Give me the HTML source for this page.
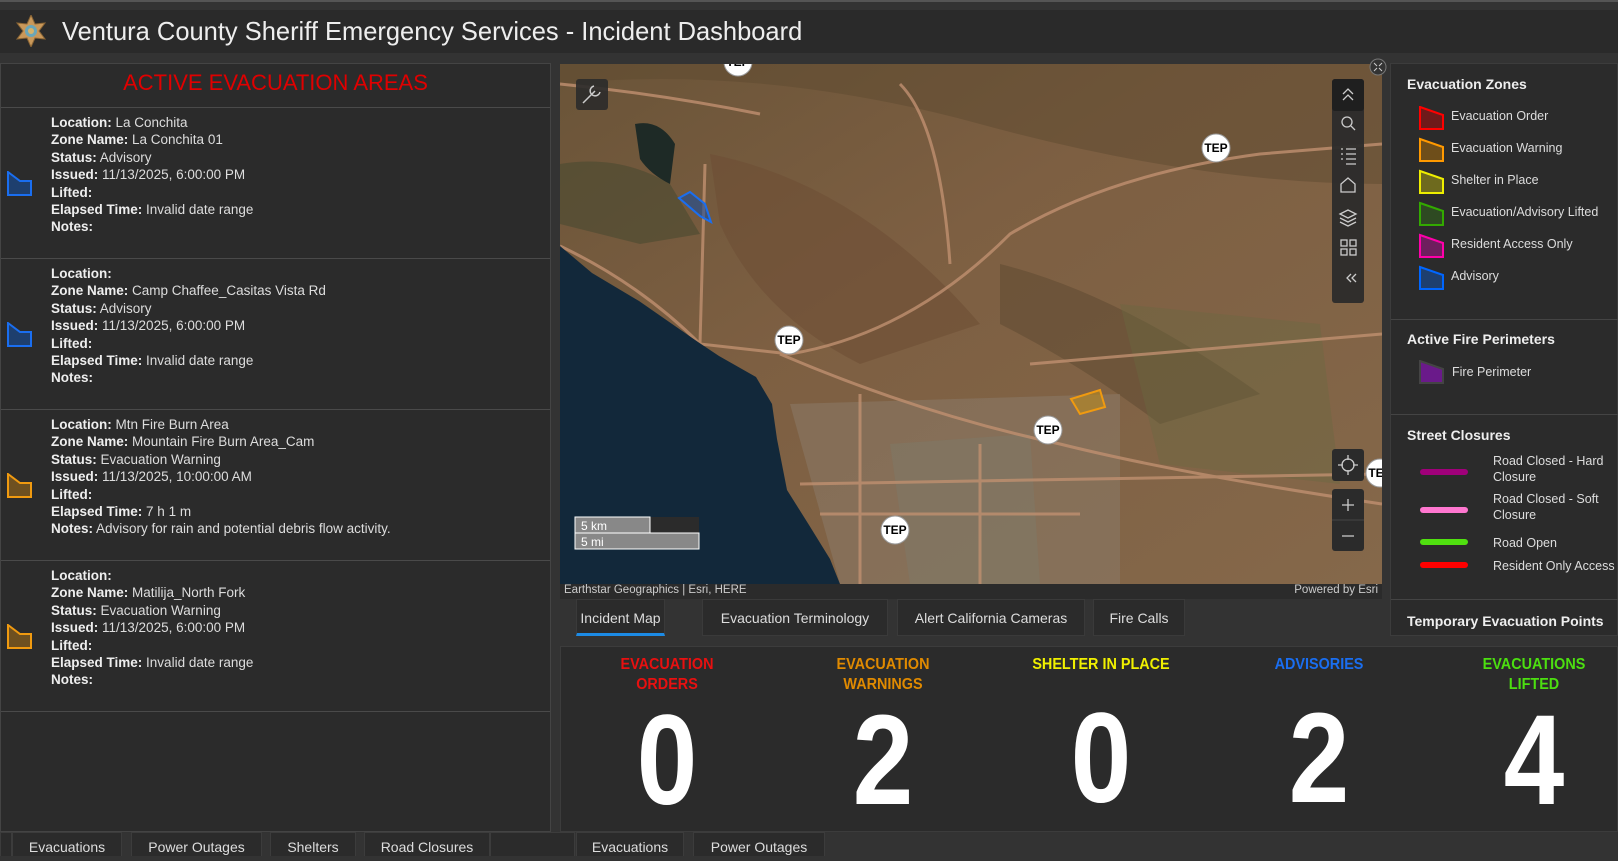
<!DOCTYPE html>
<html><head><meta charset="utf-8"><style>
*{margin:0;padding:0;box-sizing:border-box}
body{width:1618px;height:856px;overflow:hidden;background:#333;font-family:"Liberation Sans",sans-serif;color:#ddd;position:relative}
.a{position:absolute}
.hdr{left:0;top:10px;width:1618px;height:43px;background:#2a2a2a}
.hdr h1{position:absolute;left:62px;top:6px;font-weight:normal;font-size:26px;color:#eee;white-space:nowrap;transform:scaleX(.98);transform-origin:left}
.lp{left:0;top:63px;width:551px;height:769px;background:#2b2b2b;border:1px solid #444}
.item{position:absolute;left:0;width:549px;height:151px;border-top:1px solid #4a4a4a}
.item .t{position:absolute;left:50px;top:6px;font-size:13.5px;line-height:17.4px;color:#ddd}
.item b{color:#eee}
.item svg{position:absolute;left:6px;top:63px}
.map{left:560px;top:64px;width:822px;height:520px;overflow:hidden;background:#7a6045}
.attr{left:560px;top:584px;width:822px;height:15px;background:#2b2b2b;font-size:11.5px;color:#ccc}
.tab{position:absolute;top:599px;height:37px;background:#2b2b2b;border:1px solid #3a3a3a;font-size:14px;color:#ddd;text-align:center;line-height:36px}
.stats{left:560px;top:646px;width:1058px;height:186px;background:#2b2b2b;border:1px solid #3c3c3c}
.col{position:absolute;top:0;width:200px;margin-left:-100px;text-align:center}
.col .h{position:absolute;top:8px;width:200px;font-size:16px;font-weight:bold;line-height:20px;transform:scaleX(.9)}
.col .n{position:absolute;top:39px;width:200px;font-size:128px;font-weight:bold;color:#fff;transform:scaleX(.85);line-height:150px}
.rp{left:1390px;top:63px;width:228px;height:573px;background:#2b2b2b;border:1px solid #3c3c3c}
.lg{position:absolute;left:16px;font-size:14px;font-weight:bold;color:#eee}
.li{position:absolute;left:60px;font-size:12.5px;color:#ddd;line-height:16px}
.sep{position:absolute;left:0;width:228px;height:1px;background:#444}
.btab{position:absolute;top:832px;height:24px;background:#2b2b2b;border:1px solid #3c3c3c;border-bottom:none;font-size:14px;color:#ddd;text-align:center;line-height:28px}
.tep{fill:#fff;stroke:#999}
</style></head><body>
<div class="a" style="left:0;top:0;width:1618px;height:2px;background:#555"></div>
<div class="a hdr">
<svg class="a" style="left:16px;top:5px" width="30" height="32" viewBox="0 0 30 32"><polygon points="15,0 19,9 29,8 23,16 29,24 19,23 15,32 11,23 1,24 7,16 1,8 11,9" fill="#c9985a" stroke="#8a6535"/><circle cx="15" cy="16" r="6" fill="#6aa6b8"/><circle cx="15" cy="16" r="3" fill="#d6b36a"/></svg>
<h1>Ventura County Sheriff Emergency Services - Incident Dashboard</h1></div>

<div class="a lp">
<div class="a" style="left:0;top:0;width:549px;height:43px;text-align:center;color:#e00000;font-size:22px;line-height:38px">ACTIVE EVACUATION AREAS</div>
<div class="item" style="top:43px"><svg width="26" height="26"><polygon points="1,1 13,10 24,10 24,24 1,24" fill="#1e3f6e" stroke="#1a6ef0" stroke-width="2"/></svg><div class="t"><b>Location:</b> La Conchita<br><b>Zone Name:</b> La Conchita 01<br><b>Status:</b> Advisory<br><b>Issued:</b> 11/13/2025, 6:00:00 PM<br><b>Lifted:</b><br><b>Elapsed Time:</b> Invalid date range<br><b>Notes:</b></div></div>
<div class="item" style="top:194px"><svg width="26" height="26"><polygon points="1,1 13,10 24,10 24,24 1,24" fill="#1e3f6e" stroke="#1a6ef0" stroke-width="2"/></svg><div class="t"><b>Location:</b><br><b>Zone Name:</b> Camp Chaffee_Casitas Vista Rd<br><b>Status:</b> Advisory<br><b>Issued:</b> 11/13/2025, 6:00:00 PM<br><b>Lifted:</b><br><b>Elapsed Time:</b> Invalid date range<br><b>Notes:</b></div></div>
<div class="item" style="top:345px"><svg width="26" height="26"><polygon points="1,1 13,10 24,10 24,24 1,24" fill="#6e5020" stroke="#f09a10" stroke-width="2"/></svg><div class="t"><b>Location:</b> Mtn Fire Burn Area<br><b>Zone Name:</b> Mountain Fire Burn Area_Cam<br><b>Status:</b> Evacuation Warning<br><b>Issued:</b> 11/13/2025, 10:00:00 AM<br><b>Lifted:</b><br><b>Elapsed Time:</b> 7 h 1 m<br><b>Notes:</b> Advisory for rain and potential debris flow activity.</div></div>
<div class="item" style="top:496px"><svg width="26" height="26"><polygon points="1,1 13,10 24,10 24,24 1,24" fill="#6e5020" stroke="#f09a10" stroke-width="2"/></svg><div class="t"><b>Location:</b><br><b>Zone Name:</b> Matilija_North Fork<br><b>Status:</b> Evacuation Warning<br><b>Issued:</b> 11/13/2025, 6:00:00 PM<br><b>Lifted:</b><br><b>Elapsed Time:</b> Invalid date range<br><b>Notes:</b></div></div>
<div class="item" style="top:647px;height:0"></div>
</div>

<div class="a map"><svg width="822" height="520" viewBox="0 0 822 520">
<defs><linearGradient id="g" x1="0" y1="0" x2="1" y2="1"><stop offset="0" stop-color="#6a5438"/><stop offset=".4" stop-color="#7d5f42"/><stop offset="1" stop-color="#85684a"/></linearGradient></defs>
<rect width="822" height="520" fill="url(#g)"/>
<path d="M0 20 Q200 0 420 60 T822 120 L822 0 L0 0Z" fill="#5e4a30" opacity=".5"/>
<path d="M150 90 Q300 120 420 260 L300 300 Q200 250 160 160Z" fill="#6e4e36" opacity=".6"/>
<path d="M440 200 Q560 230 700 330 L600 360 Q520 300 440 260Z" fill="#5c4830" opacity=".5"/>
<path d="M0 100 Q60 90 110 120 L140 170 L80 180 L0 160Z" fill="#4a4a30" opacity=".6"/>
<path d="M230 340 L560 330 L560 520 L280 520Z" fill="#8a7a68" opacity=".55"/>
<path d="M330 380 L470 370 L480 520 L350 520Z" fill="#7d7a68" opacity=".5"/>
<path d="M560 240 L760 260 L780 420 L600 400Z" fill="#6a6a40" opacity=".4"/>
<path d="M75 60 Q100 55 115 80 L110 120 Q90 110 80 95Z" fill="#1e2a26"/>
<g stroke="#c09070" stroke-width="3" fill="none" opacity=".8">
<path d="M0 182 Q80 220 140 280 L230 290 Q350 270 450 170 Q550 110 700 90 L822 80"/>
<path d="M220 290 Q360 350 500 380 Q620 410 822 440"/>
<path d="M145 100 L140 280"/><path d="M340 20 Q380 60 390 200"/>
<path d="M470 300 L822 270"/><path d="M240 420 L820 410"/><path d="M260 450 L520 450"/>
<path d="M300 330 L300 520"/><path d="M420 380 L420 520"/><path d="M0 20 Q100 30 200 50"/>
</g>
<path d="M0 182 L32 209 L79 237 L138 278 L159 292 L196 313 L212 340 L217 375 L227 426 L249 461 L270 495 L280 520 L0 520Z" fill="#12283a"/>
<polygon points="119,134 130,128 145,140 151,158 140,152" fill="#1d4d9a" fill-opacity=".6" stroke="#1a6ef0" stroke-width="2"/>
<polygon points="511,335 540,326 545,343 520,350" fill="#b98a20" fill-opacity=".6" stroke="#f09a10" stroke-width="2"/>
<g font-family="Liberation Sans" font-weight="bold" font-size="12" text-anchor="middle">
<circle class="tep" cx="178" cy="-2" r="14"/><text x="178" y="2">TEP</text>
<circle class="tep" cx="656" cy="84" r="14"/><text x="656" y="88">TEP</text>
<circle class="tep" cx="229" cy="276" r="14"/><text x="229" y="280">TEP</text>
<circle class="tep" cx="488" cy="366" r="14"/><text x="488" y="370">TEP</text>
<circle class="tep" cx="335" cy="466" r="14"/><text x="335" y="470">TEP</text>
<circle class="tep" cx="820" cy="409" r="14"/><text x="820" y="413">TEP</text>
</g>
<rect x="16" y="15" width="32" height="31" rx="3" fill="#2b2b2b" opacity=".9"/>
<path d="M23 39 L35 27 M34 22 a5 5 0 1 0 6 6" stroke="#ccc" stroke-width="1.5" fill="none"/>
<rect x="772" y="15" width="32" height="224" rx="3" fill="#2b2b2b" opacity=".95"/>
<rect x="772" y="15" width="32" height="32" rx="3" fill="#1f1f1f"/>
<g stroke="#ccc" stroke-width="1.3" fill="none">
<path d="M783 30 l5 -5 l5 5 M783 36 l5 -5 l5 5"/>
<circle cx="787" cy="58" r="5"/><path d="M791 62 l4 4"/>
<path d="M786 85 h10 M786 90 h10 M786 95 h10 M786 100 h10 M781 85 h2 M781 90 h2 M781 95 h2"/>
<path d="M781 128 v-8 l7 -6 l7 6 v8 z"/>
<path d="M780 150 l8 -4 l8 4 l-8 4z M780 154 l8 4 l8 -4 M780 158 l8 4 l8 -4"/>
<rect x="781" y="176" width="6" height="6"/><rect x="790" y="176" width="6" height="6"/><rect x="781" y="185" width="6" height="6"/><rect x="790" y="185" width="6" height="6"/>
<path d="M791 210 l-4 4 l4 4 M796 210 l-4 4 l4 4"/>
</g>
<rect x="772" y="385" width="32" height="32" rx="3" fill="#2b2b2b"/>
<circle cx="788" cy="401" r="6" stroke="#ccc" fill="none" stroke-width="1.3"/><path d="M788 391 v5 M788 406 v5 M778 401 h5 M793 401 h5" stroke="#ccc" stroke-width="1.3"/>
<rect x="772" y="425" width="32" height="62" rx="3" fill="#2b2b2b"/>
<path d="M782 441 h12 M788 435 v12 M782 472 h12" stroke="#ccc" stroke-width="1.3"/><path d="M772 456 h32" stroke="#444"/>
<rect x="15" y="453" width="124" height="16" fill="#2b2b2b"/><rect x="15" y="453" width="75" height="16" fill="#888" stroke="#fff"/>
<rect x="15" y="469" width="124" height="16" fill="#888" stroke="#fff"/>
<text x="21" y="466" fill="#fff" font-size="12" font-family="Liberation Sans">5 km</text>
<text x="21" y="482" fill="#fff" font-size="12" font-family="Liberation Sans">5 mi</text>
</svg></div>
<svg class="a" style="left:1369px;top:58px" width="18" height="18"><circle cx="9" cy="9" r="8" fill="#333" stroke="#777"/><path d="M5 5 l3 3 M13 5 l-3 3 M5 13 l3 -3 M13 13 l-3 -3" stroke="#ccc"/></svg>
<div class="a attr"><span style="position:absolute;left:4px;top:0">Earthstar Geographics | Esri, HERE</span><span style="position:absolute;right:4px;top:0">Powered by Esri</span></div>

<div class="tab" style="left:576px;width:89px;border-bottom:3px solid #1c8be6">Incident Map</div>
<div class="tab" style="left:702px;width:186px">Evacuation Terminology</div>
<div class="tab" style="left:897px;width:188px">Alert California Cameras</div>
<div class="tab" style="left:1093px;width:92px">Fire Calls</div>

<div class="a stats">
<div class="col" style="left:106px"><div class="h" style="color:#e81010">EVACUATION<br>ORDERS</div><div class="n">0</div></div>
<div class="col" style="left:322px"><div class="h" style="color:#e08a00">EVACUATION<br>WARNINGS</div><div class="n">2</div></div>
<div class="col" style="left:540px"><div class="h" style="color:#f0f000">SHELTER IN PLACE</div><div class="n" style="top:37px">0</div></div>
<div class="col" style="left:758px"><div class="h" style="color:#1a6ef0">ADVISORIES</div><div class="n" style="top:37px">2</div></div>
<div class="col" style="left:973px"><div class="h" style="color:#4cdf10">EVACUATIONS<br>LIFTED</div><div class="n">4</div></div>
</div>

<div class="a rp">
<div class="lg" style="top:12px">Evacuation Zones</div>
<svg class="a" style="left:28px;top:42px" width="26" height="200">
<g stroke-width="2"><polygon points="1,1 24,9 24,23 1,23" fill="#6e1a1a" stroke="#f00"/>
<polygon points="1,33 24,41 24,55 1,55" fill="#6e4e1a" stroke="#f90"/>
<polygon points="1,65 24,73 24,87 1,87" fill="#6e6a1e" stroke="#ee0"/>
<polygon points="1,97 24,105 24,119 1,119" fill="#2e4a22" stroke="#3a0"/>
<polygon points="1,129 24,137 24,151 1,151" fill="#6e1e5e" stroke="#f0a"/>
<polygon points="1,161 24,169 24,183 1,183" fill="#1e3f6e" stroke="#06f"/></g></svg>
<div class="li" style="top:44px">Evacuation Order</div>
<div class="li" style="top:76px">Evacuation Warning</div>
<div class="li" style="top:108px">Shelter in Place</div>
<div class="li" style="top:140px">Evacuation/Advisory Lifted</div>
<div class="li" style="top:172px">Resident Access Only</div>
<div class="li" style="top:204px">Advisory</div>
<div class="sep" style="top:255px"></div>
<div class="lg" style="top:267px">Active Fire Perimeters</div>
<svg class="a" style="left:28px;top:296px" width="26" height="26"><polygon points="1,1 24,9 24,23 1,23" fill="#6a1a8a" stroke="#444" stroke-width="2"/></svg>
<div class="li" style="top:300px;left:61px">Fire Perimeter</div>
<div class="sep" style="top:350px"></div>
<div class="lg" style="top:363px">Street Closures</div>
<div class="a" style="left:29px;top:405px;width:48px;height:6px;border-radius:3px;background:#a0007a"></div>
<div class="a" style="left:29px;top:443px;width:48px;height:6px;border-radius:3px;background:#ff77d0"></div>
<div class="a" style="left:29px;top:475px;width:48px;height:6px;border-radius:3px;background:#50e010"></div>
<div class="a" style="left:29px;top:498px;width:48px;height:6px;border-radius:3px;background:#f00"></div>
<div class="li" style="top:389px;left:102px">Road Closed - Hard<br>Closure</div>
<div class="li" style="top:427px;left:102px">Road Closed - Soft<br>Closure</div>
<div class="li" style="top:471px;left:102px">Road Open</div>
<div class="li" style="top:494px;left:102px">Resident Only Access</div>
<div class="sep" style="top:535px"></div>
<div class="lg" style="top:549px">Temporary Evacuation Points</div>
</div>

<div class="btab" style="left:0;width:12px"></div>
<div class="btab" style="left:12px;width:110px">Evacuations</div>
<div class="btab" style="left:131px;width:131px">Power Outages</div>
<div class="btab" style="left:270px;width:86px">Shelters</div>
<div class="btab" style="left:364px;width:126px">Road Closures</div>
<div class="btab" style="left:490px;width:85px"></div>
<div class="btab" style="left:576px;width:108px">Evacuations</div>
<div class="btab" style="left:693px;width:132px">Power Outages</div>
</body></html>
